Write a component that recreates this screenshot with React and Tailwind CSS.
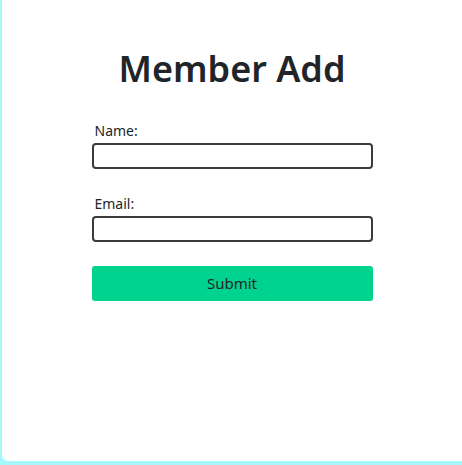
import React from 'react';

export default function App() {
  return (
    <div className="h-[465px] w-[462px] bg-[#a6f7f9] pl-[2px] pb-[4px] overflow-hidden" style={{ fontFamily: '"Noto Sans", "Open Sans", sans-serif' }}>
      <div className="h-full w-full bg-white rounded-bl-[6px] pt-[45px]">
        <h1 className="text-center text-[36px] leading-[48px] font-semibold text-[#212529]">Member Add</h1>
        <form className="w-[281px] mx-auto mt-[28px] flex flex-col" onSubmit={e => e.preventDefault()}>
          <label className="text-[14px] leading-[20px] text-[#212529] pl-[3px]">Name:</label>
          <input type="text" className="mt-[2px] h-[26px] w-full border-2 border-[#3a3a3a] rounded-[4px] outline-none" />
          <label className="mt-[25px] text-[14px] leading-[20px] text-[#212529] pl-[3px]">Email:</label>
          <input type="email" className="mt-[2px] h-[26px] w-full border-2 border-[#3a3a3a] rounded-[4px] outline-none" />
          <button type="submit" className="mt-[24px] h-[35px] w-full bg-[#00d38e] rounded-[3px] text-[15px] text-[#212529]">Submit</button>
        </form>
      </div>
    </div>
  );
}
